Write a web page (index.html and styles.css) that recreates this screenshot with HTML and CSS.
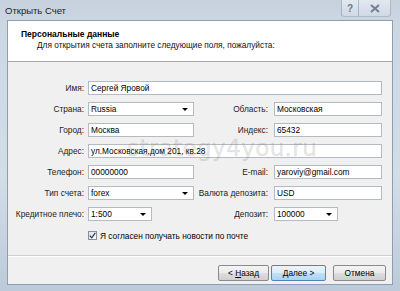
FILE: index.html
```html
<!DOCTYPE html>
<html>
<head>
<meta charset="utf-8">
<link rel="stylesheet" href="styles.css">
</head>
<body>
<div class="window">
  <div class="titlebar">
    <span class="title">Открыть Счет</span>
    <div class="caption-btns">
      <div class="cbtn help">?</div>
      <div class="cbtn close">
        <svg width="10" height="9" viewBox="0 0 10 9"><path d="M1 1 L9 8 M9 1 L1 8" stroke="#5a6a7e" stroke-width="2" fill="none"/></svg>
      </div>
    </div>
  </div>
  <div class="client">
    <div class="header">
      <div class="h-title">Персональные данные</div>
      <div class="h-sub">Для открытия счета заполните следующие поля, пожалуйста:</div>
    </div>
    <div class="body">
      <div class="form">
        <label class="l1">Имя:</label>
        <div class="field span3">Сергей Яровой</div>

        <label class="l1">Страна:</label>
        <div class="field combo">Russia<span class="arrow"></span></div>
        <label class="l2">Область:</label>
        <div class="field">Московская</div>

        <label class="l1">Город:</label>
        <div class="field">Москва</div>
        <label class="l2">Индекс:</label>
        <div class="field">65432</div>

        <label class="l1">Адрес:</label>
        <div class="field span3">ул.Московская,дом 201, кв.28</div>

        <label class="l1">Телефон:</label>
        <div class="field">00000000</div>
        <label class="l2">E-mail:</label>
        <div class="field">yaroviy@gmail.com</div>

        <label class="l1">Тип счета:</label>
        <div class="field combo">forex<span class="arrow"></span></div>
        <label class="l2">Валюта депозита:</label>
        <div class="field">USD</div>

        <label class="l1">Кредитное плечо:</label>
        <div class="cell"><div class="field combo short">1:500<span class="arrow"></span></div></div>
        <label class="l2">Депозит:</label>
        <div class="cell"><div class="field combo short">100000<span class="arrow"></span></div></div>

        <div class="check-row">
          <span class="checkbox">
            <svg width="7" height="7" viewBox="0 0 7 7"><path d="M0.8 3.6 L2.7 5.8 L6.3 0.8" stroke="#2b3f6b" stroke-width="1.3" fill="none"/></svg>
          </span>
          <span>Я согласен получать новости по почте</span>
        </div>
      </div>
      <div class="watermark">strategy4you.ru</div>
      <div class="footer">
        <div class="btn"><span>&lt; <u>Н</u>азад</span></div>
        <div class="btn default"><span><u>Д</u>алее &gt;</span></div>
        <div class="btn cancel"><span>Отмена</span></div>
      </div>
    </div>
  </div>
</div>
</body>
</html>
```
FILE: styles.css
```css
html, body {
  margin: 0;
  padding: 0;
}
body {
  width: 400px;
  height: 291px;
  overflow: hidden;
  font-family: "Liberation Sans", Arial, sans-serif;
  font-size: 8.3px;
  color: #000;
}
.window {
  width: 400px;
  height: 291px;
  box-sizing: border-box;
  display: flex;
  flex-direction: column;
  background: linear-gradient(180deg, #c6d1dd 0%, #ccd7e3 8%, #d3dde8 60%, #bccad9 100%);
  padding: 0 7px 6px 7px;
  position: relative;
}
.titlebar {
  height: 20px;
  display: flex;
  align-items: flex-start;
  position: relative;
}
.title {
  margin-left: -2px;
  margin-top: 5px;
  font-size: 9.5px;
  color: #1e1e1e;
}
.caption-btns {
  margin-left: auto;
  margin-right: 2px;
  display: flex;
  height: 17px;
}
.cbtn {
  height: 16px;
  border: 1px solid rgba(60, 80, 110, 0.3);
  border-top: none;
  background: linear-gradient(180deg, rgba(255,255,255,0.5), rgba(220,230,240,0.3));
  display: flex;
  align-items: center;
  justify-content: center;
  color: #6a7a8e;
  font-weight: bold;
  font-size: 10px;
}
.help {
  width: 16px;
  border-radius: 0 0 0 3px;
}
.close {
  width: 31px;
  border-left: none;
  border-radius: 0 0 3px 0;
}
.close svg { opacity: 0.8; }
.client {
  flex: 1;
  display: flex;
  flex-direction: column;
  border: 1px solid #8e9db0;
  background: #f0f0f0;
}
.header {
  height: 41px;
  background: #fff;
  border-bottom: 1px solid #a7a7a7;
  box-sizing: border-box;
  padding: 8px 0 0 13px;
}
.h-title {
  font-weight: bold;
  font-size: 8.5px;
  line-height: 11px;
}
.h-sub {
  padding-left: 16px;
  line-height: 10px;
  color: #111;
}
.body {
  flex: 1;
  display: flex;
  flex-direction: column;
  position: relative;
}
.form {
  display: grid;
  grid-template-columns: 80px 106px 80px 108px;
  grid-auto-rows: 14px;
  row-gap: 7px;
  padding-top: 19px;
  align-items: center;
}
label {
  text-align: right;
  white-space: nowrap;
  color: #222;
}
.l1 { padding-right: 4px; }
.l2 { padding-right: 6px; }
.field {
  height: 14px;
  box-sizing: border-box;
  background: #fff;
  border: 1px solid #b5b9c0;
  padding-left: 2px;
  line-height: 12px;
  white-space: nowrap;
  overflow: hidden;
  position: relative;
}
.span3 { grid-column: span 3; }
.cell { display: flex; }
.combo { padding-right: 12px; }
.short { width: 64px; }
.arrow {
  position: absolute;
  right: 5px;
  top: 5px;
  width: 0;
  height: 0;
  border-left: 3px solid transparent;
  border-right: 3px solid transparent;
  border-top: 3px solid #000;
}
.check-row {
  grid-column: 2 / span 3;
  display: flex;
  align-items: center;
  gap: 3px;
  margin-top: 1px;
}
.checkbox {
  width: 9px;
  height: 9px;
  box-sizing: border-box;
  border: 1px solid #8f8f8f;
  background: linear-gradient(135deg, #dfe3ea, #fafbfc);
  display: flex;
  align-items: center;
  justify-content: center;
}
.watermark {
  position: absolute;
  left: 119px;
  top: 73px;
  font-family: "DejaVu Sans", sans-serif;
  font-size: 23px;
  letter-spacing: 0.4px;
  color: rgba(130, 130, 130, 0.2);
  -webkit-text-stroke: 0.4px rgba(110, 110, 110, 0.2);
  pointer-events: none;
}
.footer {
  margin-top: 13px;
  border-top: 1px solid #d0d0d0;
  box-shadow: inset 0 1px 0 #fff;
  flex: 1;
  display: flex;
  justify-content: flex-end;
  align-items: flex-start;
  padding: 9px 6px 0 0;
  gap: 2px;
}
.btn {
  height: 16px;
  box-sizing: border-box;
  width: 51px;
  border: 1px solid #8a8a8a;
  border-radius: 2px;
  background: linear-gradient(180deg, #f4f4f4 0%, #ebebeb 48%, #dddddd 52%, #cfcfcf 100%);
  display: flex;
  align-items: center;
  justify-content: center;
}
.btn.default {
  width: 55px;
  border-color: #4b87b8;
  background: linear-gradient(180deg, #eaf5fc 0%, #d9edfb 48%, #bfe0f7 52%, #a9d4f3 100%);
}
.btn.cancel {
  margin-left: 5px;
  width: 53px;
}
u { text-decoration: underline; }
```
